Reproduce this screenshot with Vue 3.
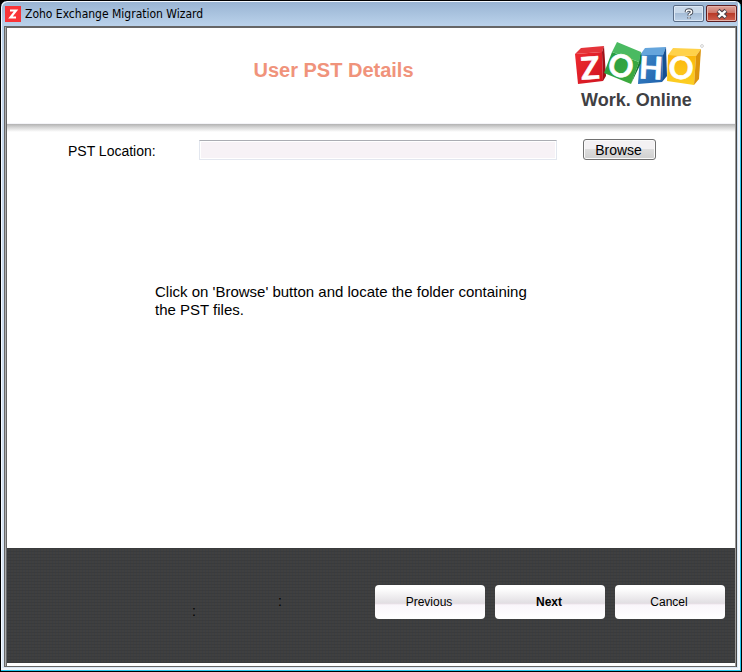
<script setup>
import { ref } from 'vue'

const pstLocation = ref('')
const actions = [
  { label: 'Previous' },
  { label: 'Next', primary: true },
  { label: 'Cancel' },
]
</script>

<template>
  <div class="window">
    <header class="titlebar">
      <svg class="app-icon" viewBox="0 0 16 16" aria-hidden="true">
        <rect width="16" height="16" fill="#f93438" />
        <path d="M5 4.5h6L5.5 11.5H11" fill="none" stroke="#fff" stroke-width="2.2" />
      </svg>
      <span class="caption">Zoho Exchange Migration Wizard</span>
      <button type="button" class="sys help" aria-label="Help">
        <svg viewBox="0 0 12 12" aria-hidden="true">
          <path d="M3.4 4.2V3.6Q3.6 2 6 2T8.6 3.9Q8.6 5 7.3 5.7Q6 6.4 6 7.5M6 9.2V10.6" fill="none" stroke="#454b57" stroke-width="3.4" />
          <path d="M3.4 4.1V3.6Q3.6 2 6 2T8.6 3.9Q8.6 5 7.3 5.7Q6 6.4 6 7.4M6 9.3V10.5" fill="none" stroke="#fff" stroke-width="1.5" />
        </svg>
      </button>
      <button type="button" class="sys close" aria-label="Close">
        <svg viewBox="0 0 12 12" aria-hidden="true">
          <path d="M2 2.5L10 9.5M10 2.5L2 9.5" fill="none" stroke="#4c4048" stroke-width="4.4" />
          <path d="M2.4 2.9L9.6 9.1M9.6 2.9L2.4 9.1" fill="none" stroke="#fff" stroke-width="2.4" />
        </svg>
      </button>
    </header>

    <main class="client">
      <section class="banner">
        <h1>User PST Details</h1>
        <div class="brand">
          <svg class="logo" viewBox="0 0 130 52" role="img" aria-label="Zoho">
            <defs>
              <linearGradient id="red" x1="0" y1="0" x2="1" y2="1"><stop stop-color="#ee2a30" /><stop offset="1" stop-color="#cf1420" /></linearGradient>
              <linearGradient id="green" x1="0" y1="0" x2="1" y2="1"><stop stop-color="#249b43" /><stop offset="1" stop-color="#42ad3c" /></linearGradient>
              <linearGradient id="blue" x1="0" y1="0" x2="1" y2="1"><stop stop-color="#3c87c9" /><stop offset="1" stop-color="#1f61ab" /></linearGradient>
              <linearGradient id="gold" x1="0" y1="0" x2="0" y2="1"><stop stop-color="#fbb60c" /><stop offset="1" stop-color="#fccf24" /></linearGradient>
            </defs>
            <path d="M0 11L6 5L29 3L27 9Z" fill="#e5343a" />
            <path d="M0 11L27 9L28 38L3 41Z" fill="url(#red)" />
            <path d="M27 9L29 3L31 33L28 38Z" fill="#9e1018" />
            <path d="M65 12L88 12L87 39L63 41Z" fill="url(#blue)" />
            <path d="M65 12L70 5L91 4L88 12Z" fill="#65a5dc" />
            <path d="M88 12L91 4L92 33L87 39Z" fill="#174f91" />
            <path d="M37 9L64 19L56 41L29 30Z" fill="url(#green)" />
            <path d="M37 9L42 -1L66 9L64 19Z" fill="#4aba61" />
            <path d="M64 19L66 9L67 18L56 41Z" fill="#177a32" />
            <path d="M93 12L98 5L126 6L121 13Z" fill="#ffd24a" />
            <path d="M93 12L121 13L119 42L92 38Z" fill="url(#gold)" />
            <path d="M121 13L126 6L124 36L119 42Z" fill="#db940d" />
            <g class="letters">
              <text x="15" y="36" transform="rotate(-4 15 25)">Z</text>
              <text x="46" y="34" transform="rotate(17 46 23)">O</text>
              <text x="76" y="36" transform="rotate(3 76 25)">H</text>
              <text x="106" y="36" transform="rotate(3 106 25)">O</text>
            </g>
            <circle cx="127" cy="3" r="1.4" fill="none" stroke="#bbb" stroke-width=".7" />
          </svg>
          <p class="tagline">Work. Online</p>
        </div>
      </section>

      <section class="content">
        <form class="location" @submit.prevent>
          <label for="pst-location">PST Location:</label>
          <input id="pst-location" v-model="pstLocation" type="text" />
          <button type="button" class="browse">Browse</button>
        </form>
        <p class="hint">Click on 'Browse' button and locate the folder containing the PST files.</p>
      </section>

      <footer class="footer">
        <div class="status">
          <span class="low">:</span>
          <span>:</span>
        </div>
        <div class="actions">
          <button
            v-for="action in actions"
            :key="action.label"
            type="button"
            :class="{ primary: action.primary }"
          >{{ action.label }}</button>
        </div>
      </footer>
    </main>
  </div>
</template>

<style>
body {
  background: #000;
}
</style>

<style scoped>
* {
  box-sizing: border-box;
}

.window {
  display: flex;
  flex-direction: column;
  min-height: 100vh;
  padding: 0 4px 4px 3px;
  border: 1px solid #000;
  border-radius: 7px 7px 0 0;
  background: linear-gradient(#98b3d2, #b9d1ea 24px, #c6d9ee 60px, #dce8f5);
  box-shadow: inset -1px -1px #25c8ee, inset 1px 1px #f4f9ff, inset -3px -3px #f4f7fb;
  color: #000;
  font-family: "Liberation Sans", Arial, sans-serif;
}

.titlebar {
  display: flex;
  align-items: center;
  height: 25px;
  padding-left: 1px;
}

.app-icon {
  width: 16px;
  height: 16px;
}

.caption {
  flex: 1;
  padding-left: 4px;
  font: 12px/16px "DejaVu Sans Condensed", "Open Sans", sans-serif;
}

.sys {
  display: grid;
  place-items: center;
  width: 31px;
  height: 17px;
  margin-left: 2px;
  padding: 0;
  border: 1px solid #5a6d87;
  border-radius: 2px;
  background: linear-gradient(#c9d9ea 45%, #a5bcd6 50%, #bdd2e9);
  box-shadow: inset 0 0 0 1px #dce8f5;
}

.sys svg {
  width: 12px;
  height: 12px;
}

.close {
  border-color: #5c1d20;
  background: linear-gradient(#dda59c 0, #cf7568 45%, #b83a28 50%, #cf6050);
  box-shadow: inset 0 0 0 1px #e6b3aa;
}

.client {
  display: flex;
  flex: 1;
  flex-direction: column;
  border-style: solid ridge solid double;
  border-width: 2px 2px 1px 3px;
  border-color: #666 #999 #666 #666;
  padding-bottom: 3px;
  background: linear-gradient(#fff, #fff) padding-box, #aaa;
}

.banner {
  display: grid;
  grid-template-columns: 1fr 162px;
  height: 96px;
  border-bottom: 1px solid #f4f4f8;
  background: #fff;
}

h1 {
  margin: 0;
  padding: 30px 0 0 87px;
  color: #f0937b;
  font-size: 20px;
  line-height: 24px;
  text-align: center;
}

.brand {
  padding-top: 15px;
}

.logo {
  display: block;
  width: 130px;
  height: 52px;
  margin-left: 2px;
  overflow: visible;
}

.letters text {
  fill: #fff;
  stroke: #fff;
  stroke-width: 0.6px;
  font: 700 31px "Lato", sans-serif;
  text-anchor: middle;
}

.tagline {
  margin: -5px 0 0 8px;
  color: #404043;
  font-size: 18px;
  font-weight: 700;
  line-height: 20px;
}

.content {
  flex: 1;
  padding-top: 15px;
  background: linear-gradient(#b2b2b2, #d2d2d2 3px, #fff 8px);
}

.location {
  display: grid;
  grid-template-columns: 131px minmax(0, 1fr) 73px;
  align-items: center;
  padding: 0 79px 0 61px;
  font-size: 14px;
}

.location label {
  padding-top: 2px;
}

.location input {
  height: 20px;
  margin-right: 26px;
  padding: 0 4px;
  border: 1px solid #e3e7ef;
  border-top-color: #abadb3;
  background: #f7f2f6;
  box-shadow: inset 0 0 0 1px #fff;
  font: inherit;
}

.browse {
  height: 21px;
  padding: 0 2px 0 0;
  border: 1px solid #707070;
  border-radius: 3px;
  background: linear-gradient(#f3f1f3 48%, #dddddd 50%, #cfcfcf);
  box-shadow: inset 0 0 0 1px #fafafa;
  color: #000;
  font: inherit;
}

.hint {
  max-width: 540px;
  margin: 123px 0 0;
  padding-left: 148px;
  font-size: 15px;
  line-height: 18px;
}

.footer {
  display: flex;
  align-items: center;
  justify-content: space-between;
  height: 115px;
  padding: 0 10px 7px 185px;
  background:
    repeating-linear-gradient(90deg, rgba(50, 58, 70, 0.3) 0 1px, transparent 1px 3px),
    repeating-linear-gradient(#3b3b3b 0 1px, #404040 1px 3px);
}

.status {
  display: flex;
  gap: 82px;
  padding-top: 8px;
  font-size: 14px;
  line-height: 16px;
}

.status .low {
  padding-top: 10px;
}

.actions {
  display: flex;
  gap: 10px;
}

.actions button {
  width: 110px;
  height: 34px;
  padding: 0 2px 0 0;
  border: 0;
  border-radius: 4px;
  background: linear-gradient(#fff 10%, #e2dfe3 52%, #e8dfe6 56%, #faf6fb 58%, #fff);
  color: #000;
  font: 12px/16px "Liberation Sans", Arial, sans-serif;
}

.actions .primary {
  font-weight: 700;
}
</style>
